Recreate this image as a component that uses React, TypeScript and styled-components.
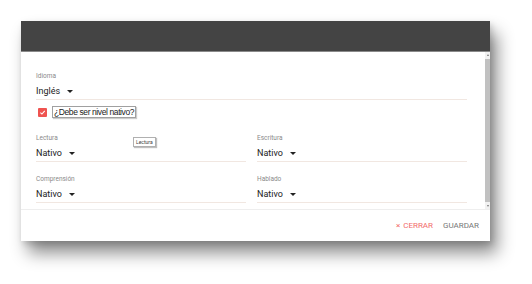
import styled, { createGlobalStyle } from "styled-components";

const GlobalStyle = createGlobalStyle`
  html, body {
    margin: 0;
    padding: 0;
    background: #ffffff;
    font-family: Roboto, "Liberation Sans", Arial, sans-serif;
  }
`;

const Page = styled.div`
  padding: 21px 0 0 21px;
  width: 532px;
  height: 284px;
  box-sizing: border-box;
`;

const Dialog = styled.div`
  width: 469px;
  height: 220px;
  background: #fff;
  display: flex;
  flex-direction: column;
  box-shadow: 7px 12px 16px rgba(0, 0, 0, 0.45), 2px 3px 6px rgba(0, 0, 0, 0.15);
`;

const Header = styled.div`
  height: 30px;
  background: #444444;
  border-bottom: 1px solid #8a8a8a;
`;

const Body = styled.div`
  height: 157px;
  display: flex;
  border-bottom: 1px solid #eeeeee;
  overflow: hidden;
`;

const Content = styled.div`
  flex: 1;
  padding: 20px 18px 12px 15px;
  display: flex;
  flex-direction: column;
  position: relative;
`;

const Scrollbar = styled.div`
  width: 5px;
  background: #f1f1f1;
  display: flex;
  flex-direction: column;
  align-items: center;
`;

const ScrollArrow = styled.span<{ $down?: boolean }>`
  width: 0;
  height: 0;
  margin: 2px 0;
  border-left: 1.5px solid transparent;
  border-right: 1.5px solid transparent;
  ${(p) =>
    p.$down ? "border-top: 2px solid #777;" : "border-bottom: 2px solid #777;"}
`;

const Thumb = styled.div`
  flex: 1;
  width: 5px;
  margin: 1px 0;
  background: #c1c1c1;
`;

const Field = styled.div`
  display: flex;
  flex-direction: column;
`;

const Label = styled.div`
  font-size: 6.5px;
  line-height: 8px;
  color: #8a8a8a;
`;

const Select = styled.div`
  display: flex;
  align-items: center;
  gap: 7px;
  height: 20px;
  padding-top: 2px;
  box-sizing: border-box;
  font-size: 9px;
  color: #222;
  border-bottom: 1px solid #f1e7e1;
`;

const Caret = styled.span`
  width: 0;
  height: 0;
  border-left: 3px solid transparent;
  border-right: 3px solid transparent;
  border-top: 3px solid #222;
  margin-top: 1px;
`;

const CheckRow = styled.div`
  display: flex;
  align-items: center;
  gap: 5px;
  margin: 6px 0 0 2px;
`;

const Box = styled.span`
  width: 9px;
  height: 9px;
  border-radius: 1px;
  background: #ef5350;
  display: flex;
  align-items: center;
  justify-content: center;
`;

const CheckLabel = styled.span`
  font-family: "Liberation Sans", Arial, sans-serif;
  font-size: 8.5px;
  letter-spacing: -0.4px;
  color: #222;
  padding: 0 1px;
  border: 1px solid #a0a0a0;
  box-shadow: 1px 1px 1px rgba(0, 0, 0, 0.2);
  line-height: 10px;
`;

const Grid = styled.div`
  display: grid;
  grid-template-columns: 1fr 1fr;
  column-gap: 11px;
  row-gap: 13px;
  margin-top: 16px;
`;

const Tooltip = styled.div`
  position: absolute;
  left: 112px;
  top: 85px;
  padding: 1px 2px;
  font-size: 5px;
  line-height: 6px;
  color: #444;
  background: #fff;
  border: 1px solid #b0b0b0;
  box-shadow: 1px 1px 1px rgba(0, 0, 0, 0.25);
`;

const Footer = styled.div`
  flex: 1;
  display: flex;
  align-items: center;
  justify-content: flex-end;
  gap: 10px;
  padding: 0 11px 0 0;
`;

const Action = styled.span<{ $danger?: boolean }>`
  font-size: 8px;
  color: ${(p) => (p.$danger ? "#f26b6b" : "#777")};
  display: flex;
  align-items: center;
  gap: 3px;
`;

const levels = [
  { label: "Lectura", value: "Nativo" },
  { label: "Escritura", value: "Nativo" },
  { label: "Comprensión", value: "Nativo" },
  { label: "Hablado", value: "Nativo" },
];

export default function App() {
  return (
    <>
      <GlobalStyle />
      <Page>
        <Dialog>
          <Header />
          <Body>
            <Content>
              <Field>
                <Label>Idioma</Label>
                <Select>
                  Inglés <Caret />
                </Select>
              </Field>
              <CheckRow>
                <Box>
                  <svg width="7" height="7" viewBox="0 0 10 10">
                    <path d="M2 5.2 L4.2 7.3 L8.2 2.8" stroke="#fff" strokeWidth="1.5" fill="none" />
                  </svg>
                </Box>
                <CheckLabel>¿Debe ser nivel nativo?</CheckLabel>
              </CheckRow>
              <Grid>
                {levels.map((l) => (
                  <Field key={l.label}>
                    <Label>{l.label}</Label>
                    <Select>
                      {l.value} <Caret />
                    </Select>
                  </Field>
                ))}
              </Grid>
              <Tooltip>Lectura</Tooltip>
            </Content>
            <Scrollbar>
              <ScrollArrow />
              <Thumb />
              <ScrollArrow $down />
            </Scrollbar>
          </Body>
          <Footer>
            <Action $danger>
              <span>×</span>CERRAR
            </Action>
            <Action>GUARDAR</Action>
          </Footer>
        </Dialog>
      </Page>
    </>
  );
}
